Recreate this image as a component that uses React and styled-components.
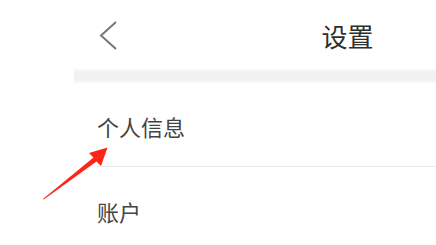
import React from 'react';
import styled, { createGlobalStyle } from 'styled-components';

const GlobalStyle = createGlobalStyle`
  html, body {
    margin: 0;
    padding: 0;
    background: #ffffff;
    overflow: hidden;
  }
  body {
    font-family: "Noto Sans CJK SC", "Noto Sans", sans-serif;
  }
`;

const Page = styled.div`
  position: relative;
  width: 436px;
  height: 245px;
  overflow: hidden;
  background: #ffffff;
`;

// la pantalla del telefono empieza en x=74 y sale por la derecha
const Screen = styled.div`
  margin-left: 74px;
  width: 547px;
`;

const Header = styled.header`
  height: 69px;
  display: grid;
  grid-template-columns: 1fr auto 1fr;
  align-items: center;
`;

const BackButton = styled.button`
  justify-self: start;
  margin-left: 25px;
  padding: 0;
  border: 0;
  background: none;
  display: flex;
  margin-top: 2px;
`;

const Title = styled.h1`
  margin: 0;
  font-size: 26px;
  font-weight: 400;
  color: #2e2e2e;
  line-height: 1;
  margin-top: 2px;
`;

const Band = styled.div`
  height: 14px;
  background: linear-gradient(to bottom, #f8f8f8 0%, #f1f1f1 25%, #f2f2f2 75%, #f8f8f8 100%);
`;

const List = styled.ul`
  list-style: none;
  margin: 0;
  padding: 0;
`;

const Row = styled.li`
  padding-left: 23px;
`;

const RowInner = styled.div`
  height: 84px;
  display: flex;
  align-items: center;
  font-size: 22px;
  color: #444444;
  line-height: 1;
  padding-top: 3px;
  box-sizing: border-box;
  border-bottom: ${p => (p.$last ? 'none' : '1px solid #ebebeb')};
`;

const Arrow = styled.svg`
  position: absolute;
  left: 0;
  top: 0;
  pointer-events: none;
`;

const ChevronLeft = () => (
  <svg width="19" height="29" viewBox="0 0 19 29">
    <path d="M17 1 L2 14.5 L17 28" fill="none" stroke="#777777" strokeWidth="2" />
  </svg>
);

const items = ['个人信息', '账户'];

const App = () => {
  return (
    <Page>
      <GlobalStyle />
      <Screen>
        <Header>
          <BackButton aria-label="back">
            <ChevronLeft />
          </BackButton>
          <Title>设置</Title>
          <span />
        </Header>
        <Band />
        <List>
          {items.map((label, i) => (
            <Row key={label}>
              <RowInner $last={i === items.length - 1}>{label}</RowInner>
            </Row>
          ))}
        </List>
      </Screen>
      <Arrow width="436" height="245" viewBox="0 0 436 245">
        <polygon
          points="43,199 93.5,157.5 89,153 107.5,147.5 101,166 96.5,161.5 43.8,199.6"
          fill="#ff2419"
        />
      </Arrow>
    </Page>
  );
};

export default App;
